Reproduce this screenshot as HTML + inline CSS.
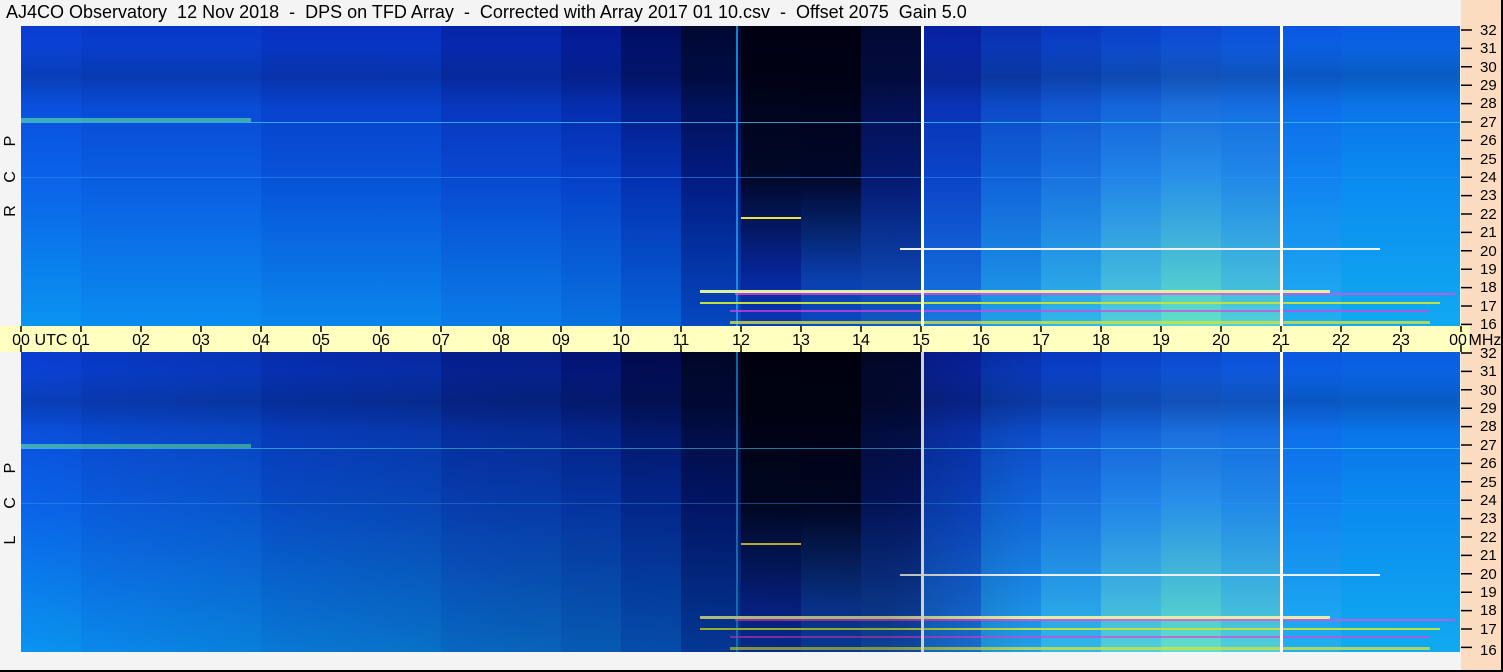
<!DOCTYPE html>
<html><head><meta charset="utf-8"><style>
body{margin:0;width:1503px;height:672px;overflow:hidden;background:#f4f4f4;font-family:"Liberation Sans",sans-serif;position:relative}
.t{position:absolute;left:6px;top:2px;font-size:18px;color:#000;white-space:pre}
.peach{position:absolute;left:1461px;top:0;width:40px;height:670px;background:#fcdcc0}
.rb{position:absolute;left:1501px;top:0;width:2px;height:672px;background:#000}
.bb{position:absolute;left:0;top:670px;width:1503px;height:2px;background:#000}
</style></head><body>
<div class="t">AJ4CO Observatory  12 Nov 2018  -  DPS on TFD Array  -  Corrected with Array 2017 01 10.csv  -  Offset 2075  Gain 5.0</div>
<div class="peach"></div>
<svg width="1503" height="672" style="position:absolute;left:0;top:0" font-family="Liberation Sans, sans-serif">
<defs>
<linearGradient id="g0" x1="0" y1="0" x2="0" y2="1"><stop offset="0" stop-color="#0a3cd0"/><stop offset=".5" stop-color="#0a62e8"/><stop offset="1" stop-color="#0a94f0"/></linearGradient>
<linearGradient id="g1" x1="0" y1="0" x2="0" y2="1"><stop offset="0" stop-color="#0838c8"/><stop offset=".5" stop-color="#0a5ce0"/><stop offset="1" stop-color="#0a8cf0"/></linearGradient>
<linearGradient id="g2" x1="0" y1="0" x2="0" y2="1"><stop offset="0" stop-color="#0830c0"/><stop offset=".5" stop-color="#0852d8"/><stop offset="1" stop-color="#0a86ec"/></linearGradient>
<linearGradient id="g3" x1="0" y1="0" x2="0" y2="1"><stop offset="0" stop-color="#0624a8"/><stop offset=".5" stop-color="#0848d0"/><stop offset="1" stop-color="#0a7ce8"/></linearGradient>
<linearGradient id="g4" x1="0" y1="0" x2="0" y2="1"><stop offset="0" stop-color="#041890"/><stop offset=".5" stop-color="#0640c8"/><stop offset="1" stop-color="#0872e0"/></linearGradient>
<linearGradient id="g5" x1="0" y1="0" x2="0" y2="1"><stop offset="0" stop-color="#020c60"/><stop offset=".5" stop-color="#0430b0"/><stop offset="1" stop-color="#0662d8"/></linearGradient>
<linearGradient id="g6" x1="0" y1="0" x2="0" y2="1"><stop offset="0" stop-color="#000830"/><stop offset=".5" stop-color="#021a80"/><stop offset="1" stop-color="#0448c0"/></linearGradient>
<linearGradient id="g7" x1="0" y1="0" x2="0" y2="1"><stop offset="0" stop-color="#000010"/><stop offset=".5" stop-color="#000828"/><stop offset=".85" stop-color="#0628a0"/><stop offset="1" stop-color="#0838b0"/></linearGradient>
<linearGradient id="g8" x1="0" y1="0" x2="0" y2="1"><stop offset="0" stop-color="#000010"/><stop offset=".5" stop-color="#000628"/><stop offset=".85" stop-color="#0a40b0"/><stop offset="1" stop-color="#0a48c0"/></linearGradient>
<linearGradient id="g9" x1="0" y1="0" x2="0" y2="1"><stop offset="0" stop-color="#020830"/><stop offset=".5" stop-color="#041870"/><stop offset="1" stop-color="#1058c8"/></linearGradient>
<linearGradient id="g10" x1="0" y1="0" x2="0" y2="1"><stop offset="0" stop-color="#0820a0"/><stop offset=".5" stop-color="#0a44c8"/><stop offset="1" stop-color="#1878e0"/></linearGradient>
<linearGradient id="g11" x1="0" y1="0" x2="0" y2="1"><stop offset="0" stop-color="#0830b0"/><stop offset=".5" stop-color="#1062d8"/><stop offset="1" stop-color="#20a0e8"/></linearGradient>
<linearGradient id="g12" x1="0" y1="0" x2="0" y2="1"><stop offset="0" stop-color="#0838c0"/><stop offset=".5" stop-color="#1872e0"/><stop offset="1" stop-color="#30b8e8"/></linearGradient>
<linearGradient id="g13" x1="0" y1="0" x2="0" y2="1"><stop offset="0" stop-color="#0840c8"/><stop offset=".5" stop-color="#2084e8"/><stop offset="1" stop-color="#50d0d8"/></linearGradient>
<linearGradient id="g14" x1="0" y1="0" x2="0" y2="1"><stop offset="0" stop-color="#0a48d0"/><stop offset=".5" stop-color="#2890e8"/><stop offset="1" stop-color="#60e0c8"/></linearGradient>
<linearGradient id="g15" x1="0" y1="0" x2="0" y2="1"><stop offset="0" stop-color="#0a50d8"/><stop offset=".5" stop-color="#2088e8"/><stop offset="1" stop-color="#50d0d8"/></linearGradient>
<linearGradient id="g16" x1="0" y1="0" x2="0" y2="1"><stop offset="0" stop-color="#0a58e0"/><stop offset=".5" stop-color="#1082f0"/><stop offset="1" stop-color="#20b0f0"/></linearGradient>
<linearGradient id="g17" x1="0" y1="0" x2="0" y2="1"><stop offset="0" stop-color="#0a5ce0"/><stop offset=".5" stop-color="#0a8af0"/><stop offset="1" stop-color="#10aaf0"/></linearGradient>
<linearGradient id="dk" x1="0" y1="0" x2="1" y2="0"><stop offset="0" stop-color="#000" stop-opacity="0"/><stop offset=".35" stop-color="#000" stop-opacity=".2"/><stop offset=".6" stop-color="#000" stop-opacity=".25"/><stop offset=".7" stop-color="#000" stop-opacity="0"/></linearGradient>
<linearGradient id="topband" x1="0" y1="0" x2="0" y2="1"><stop offset="0" stop-color="#000" stop-opacity="0"/><stop offset=".5" stop-color="#000" stop-opacity=".15"/><stop offset="1" stop-color="#000" stop-opacity="0"/></linearGradient>
<g id="panel">
<rect x="21" y="0" width="61" height="300" fill="url(#g0)"/>
<rect x="81" y="0" width="181" height="300" fill="url(#g1)"/>
<rect x="261" y="0" width="181" height="300" fill="url(#g2)"/>
<rect x="441" y="0" width="121" height="300" fill="url(#g3)"/>
<rect x="561" y="0" width="61" height="300" fill="url(#g4)"/>
<rect x="621" y="0" width="61" height="300" fill="url(#g5)"/>
<rect x="681" y="0" width="61" height="300" fill="url(#g6)"/>
<rect x="741" y="0" width="61" height="300" fill="url(#g7)"/>
<rect x="801" y="0" width="61" height="300" fill="url(#g8)"/>
<rect x="861" y="0" width="61" height="300" fill="url(#g9)"/>
<rect x="921" y="0" width="61" height="300" fill="url(#g10)"/>
<rect x="981" y="0" width="61" height="300" fill="url(#g11)"/>
<rect x="1041" y="0" width="61" height="300" fill="url(#g12)"/>
<rect x="1101" y="0" width="61" height="300" fill="url(#g13)"/>
<rect x="1161" y="0" width="61" height="300" fill="url(#g14)"/>
<rect x="1221" y="0" width="61" height="300" fill="url(#g15)"/>
<rect x="1281" y="0" width="61" height="300" fill="url(#g16)"/>
<rect x="1341" y="0" width="119" height="300" fill="url(#g17)"/>
<rect x="21" y="20" width="1439" height="60" fill="url(#topband)"/>
<rect x="21" y="92" width="230" height="4" fill="#60e8a0" opacity=".6"/>
<rect x="21" y="96" width="1439" height="1" fill="#40c0f0" opacity=".8"/>
<rect x="21" y="151" width="1439" height="1" fill="#3090f0" opacity=".6"/>
<rect x="736" y="0" width="2" height="300" fill="#20a0f0" opacity=".8"/>
<rect x="741" y="191" width="60" height="2" fill="#f0e040"/>
<rect x="700" y="264" width="630" height="3" fill="#e0f0a0"/>
<rect x="735" y="267" width="720" height="2" fill="#ff40e0" opacity=".7"/>
<rect x="700" y="276" width="740" height="2" fill="#c0e040"/>
<rect x="730" y="284" width="700" height="2" fill="#e040e0" opacity=".7"/>
<rect x="900" y="222" width="480" height="2" fill="#f0f0f0"/>
<rect x="730" y="295" width="700" height="3" fill="#d0e040" opacity=".8"/>
<rect x="921" y="0" width="3" height="300" fill="#fff"/>
<rect x="1280" y="0" width="3" height="300" fill="#fff"/>
</g>
</defs>
<use href="#panel" x="0" y="26"/>
<use href="#panel" x="0" y="352"/>
<rect x="21" y="352" width="1439" height="300" fill="url(#dk)"/>
<rect x="0" y="326" width="1470" height="26" fill="#ffffc0"/>
<g stroke="#000" stroke-width="1.5">
<path d="M21 326v6M81 326v6M141 326v6M201 326v6M261 326v6M321 326v6M381 326v6M441 326v6M501 326v6M561 326v6M621 326v6M681 326v6M741 326v6M801 326v6M861 326v6M921 326v6M981 326v6M1041 326v6M1101 326v6M1161 326v6M1221 326v6M1281 326v6M1341 326v6M1401 326v6M1461 326v6"/>
<path d="M21 345v7M81 345v7M141 345v7M201 345v7M261 345v7M321 345v7M381 345v7M441 345v7M501 345v7M561 345v7M621 345v7M681 345v7M741 345v7M801 345v7M861 345v7M921 345v7M981 345v7M1041 345v7M1101 345v7M1161 345v7M1221 345v7M1281 345v7M1341 345v7M1401 345v7M1461 345v7"/>
</g>
<g font-size="16" text-anchor="middle">
<text x="21" y="345">00</text><text x="51" y="345">UTC</text><text x="81" y="345">01</text><text x="141" y="345">02</text><text x="201" y="345">03</text><text x="261" y="345">04</text><text x="321" y="345">05</text><text x="381" y="345">06</text><text x="441" y="345">07</text><text x="501" y="345">08</text><text x="561" y="345">09</text><text x="621" y="345">10</text><text x="681" y="345">11</text><text x="741" y="345">12</text><text x="801" y="345">13</text><text x="861" y="345">14</text><text x="921" y="345">15</text><text x="981" y="345">16</text><text x="1041" y="345">17</text><text x="1101" y="345">18</text><text x="1161" y="345">19</text><text x="1221" y="345">20</text><text x="1281" y="345">21</text><text x="1341" y="345">22</text><text x="1401" y="345">23</text><text x="1458" y="345">00</text><text x="1485" y="345">MHz</text>
</g>
<g id="sc" stroke="#000" stroke-width="1.5">
<path d="M1461 30h11M1461 48.4h11M1461 66.8h11M1461 85.2h11M1461 103.6h11M1461 122h11M1461 140.4h11M1461 158.8h11M1461 177.2h11M1461 195.6h11M1461 214h11M1461 232.4h11M1461 250.8h11M1461 269.2h11M1461 287.6h11M1461 306h11M1461 324.4h11"/>
</g>
<use href="#sc" y="323"/>
<g font-size="15">
<text x="1480" y="35">32</text><text x="1480" y="53">31</text><text x="1480" y="72">30</text><text x="1480" y="90">29</text><text x="1480" y="108">28</text><text x="1480" y="127">27</text><text x="1480" y="145">26</text><text x="1480" y="164">25</text><text x="1480" y="182">24</text><text x="1480" y="200">23</text><text x="1480" y="219">22</text><text x="1480" y="237">21</text><text x="1480" y="256">20</text><text x="1480" y="274">19</text><text x="1480" y="292">18</text><text x="1480" y="311">17</text><text x="1480" y="329">16</text>
<text x="1480" y="358">32</text><text x="1480" y="376">31</text><text x="1480" y="395">30</text><text x="1480" y="413">29</text><text x="1480" y="431">28</text><text x="1480" y="450">27</text><text x="1480" y="468">26</text><text x="1480" y="487">25</text><text x="1480" y="505">24</text><text x="1480" y="523">23</text><text x="1480" y="542">22</text><text x="1480" y="560">21</text><text x="1480" y="579">20</text><text x="1480" y="597">19</text><text x="1480" y="615">18</text><text x="1480" y="634">17</text><text x="1480" y="655">16</text>
</g>
<g font-size="16" text-anchor="middle">
<text transform="translate(15,141) rotate(-90)">P</text>
<text transform="translate(15,177) rotate(-90)">C</text>
<text transform="translate(15,211) rotate(-90)">R</text>
<text transform="translate(15,468) rotate(-90)">P</text>
<text transform="translate(15,503) rotate(-90)">C</text>
<text transform="translate(15,540) rotate(-90)">L</text>
</g>
</svg>
<div class="rb"></div><div class="bb"></div>
</body></html>
